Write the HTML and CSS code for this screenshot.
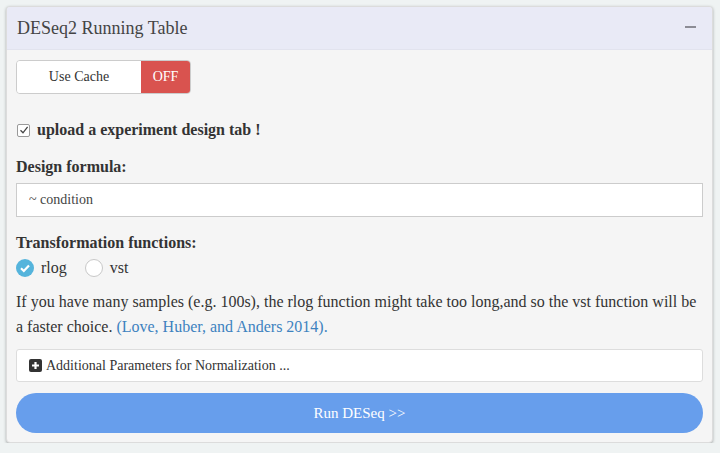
FILE: index.html
```html
<!DOCTYPE html>
<html>
<head>
<meta charset="utf-8">
<link rel="stylesheet" href="styles.css">
</head>
<body>
<div class="card">
  <div class="card-header">
    <span class="title">DESeq2 Running Table</span>
    <span class="minus"></span>
  </div>
  <div class="card-body">
    <div class="toggle">
      <span class="toggle-label">Use Cache</span>
      <span class="toggle-off">OFF</span>
    </div>
    <div class="check-row">
      <span class="checkbox">
        <svg width="10" height="10" viewBox="0 0 10 10"><path d="M1.5 5.2 L4 7.8 L8.6 1.8" fill="none" stroke="#444" stroke-width="1.3"/></svg>
      </span>
      <span class="check-text">upload a experiment design tab !</span>
    </div>
    <div class="label label-formula">Design formula:</div>
    <div class="input">~ condition</div>
    <div class="label label-trans">Transformation functions:</div>
    <div class="radios">
      <span class="radio radio-on">
        <svg width="18" height="18" viewBox="0 0 18 18"><circle cx="9" cy="9" r="9" fill="#55b4dc"/><path d="M5 9.3 L7.8 12 L13 6.4" fill="none" stroke="#fff" stroke-width="2.2"/></svg>
      </span>
      <span class="radio-text">rlog</span>
      <span class="radio radio-off"></span>
      <span class="radio-text">vst</span>
    </div>
    <p class="note">If you have many samples (e.g. 100s), the rlog function might take too long,and so the vst function will be a faster choice. <a class="ref">(Love, Huber, and Anders 2014).</a></p>
    <div class="extra">
      <span class="plus">
        <svg width="13" height="13" viewBox="0 0 13 13"><rect width="13" height="13" rx="2" fill="#333"/><path d="M6.5 3 V10 M3 6.5 H10" stroke="#fff" stroke-width="2.2"/></svg>
      </span>
      <span>Additional Parameters for Normalization ...</span>
    </div>
    <div class="run">Run DESeq &gt;&gt;</div>
  </div>
</div>
</body>
</html>
```

FILE: styles.css
```css
html, body {
  margin: 0;
  padding: 0;
  background: #eff3f3;
}
body {
  font-family: "Liberation Serif", "Times New Roman", serif;
  color: #333;
  padding: 6px 0 0 6px;
}
.card {
  width: 707px;
  height: 437px;
  box-sizing: border-box;
  background: #f5f5f5;
  border: 1px solid #dcdcdc;
  border-radius: 4px;
  box-shadow: 0 1px 3px rgba(0,0,0,0.3);
  overflow: hidden;
}
.card-header {
  height: 43px;
  box-sizing: border-box;
  background: #e9eaf6;
  border-bottom: 1px solid #e2e3ee;
  display: flex;
  align-items: center;
  justify-content: space-between;
  padding: 0 16px 0 10px;
}
.title {
  font-size: 18px;
  color: #444;
}
.minus {
  width: 11px;
  height: 2px;
  background: #8c8c95;
  margin-top: -3px;
}
.card-body {
  padding: 10px 9px 10px 9px;
}
.toggle {
  display: flex;
  width: 175px;
  height: 34px;
  box-sizing: border-box;
  border: 1px solid #ccc;
  border-radius: 4px;
  overflow: hidden;
  font-size: 14px;
}
.toggle-label {
  flex: 0 0 124px;
  background: #fff;
  color: #333;
  display: flex;
  align-items: center;
  justify-content: center;
}
.toggle-off {
  flex: 1;
  background: #d9534f;
  color: #fff;
  display: flex;
  align-items: center;
  justify-content: center;
}
.check-row {
  margin-top: 26px;
  height: 20px;
  display: flex;
  align-items: center;
}
.checkbox {
  width: 11px;
  height: 11px;
  border: 1px solid #999;
  border-radius: 2px;
  background: #fff;
  display: flex;
  align-items: center;
  justify-content: center;
  margin-left: 1px;
  margin-right: 7px;
}
.check-text {
  font-weight: bold;
  font-size: 16px;
  color: #333;
}
.label {
  font-weight: bold;
  font-size: 16px;
  height: 20px;
  line-height: 20px;
  color: #333;
}
.label-formula {
  margin-top: 17px;
}
.input {
  margin-top: 6px;
  height: 34px;
  box-sizing: border-box;
  border: 1px solid #ccc;
  background: #fff;
  font-size: 14px;
  color: #444;
  display: flex;
  align-items: center;
  padding-left: 12px;
}
.label-trans {
  margin-top: 16px;
}
.radios {
  margin-top: 5px;
  height: 20px;
  display: flex;
  align-items: center;
  font-size: 16px;
}
.radio {
  width: 18px;
  height: 18px;
  margin-right: 7px;
  display: block;
}
.radio-off {
  box-sizing: border-box;
  border: 1px solid #c8c8c8;
  border-radius: 50%;
  background: #fff;
  margin-left: 18px;
}
.radio-text {
  color: #333;
}
.note {
  margin: 11px 0 0 0;
  font-size: 16px;
  line-height: 25px;
  color: #333;
}
.ref {
  color: #3d82bf;
}
.extra {
  margin-top: 10px;
  height: 33px;
  box-sizing: border-box;
  border: 1px solid #ddd;
  border-radius: 3px;
  background: #fff;
  display: flex;
  align-items: center;
  padding-left: 12px;
  font-size: 14px;
  color: #333;
}
.plus {
  display: flex;
  margin-right: 4px;
}
.run {
  margin-top: 11px;
  height: 40px;
  border-radius: 20px;
  background: #679eec;
  color: #fff;
  font-size: 15px;
  display: flex;
  align-items: center;
  justify-content: center;
}
```
